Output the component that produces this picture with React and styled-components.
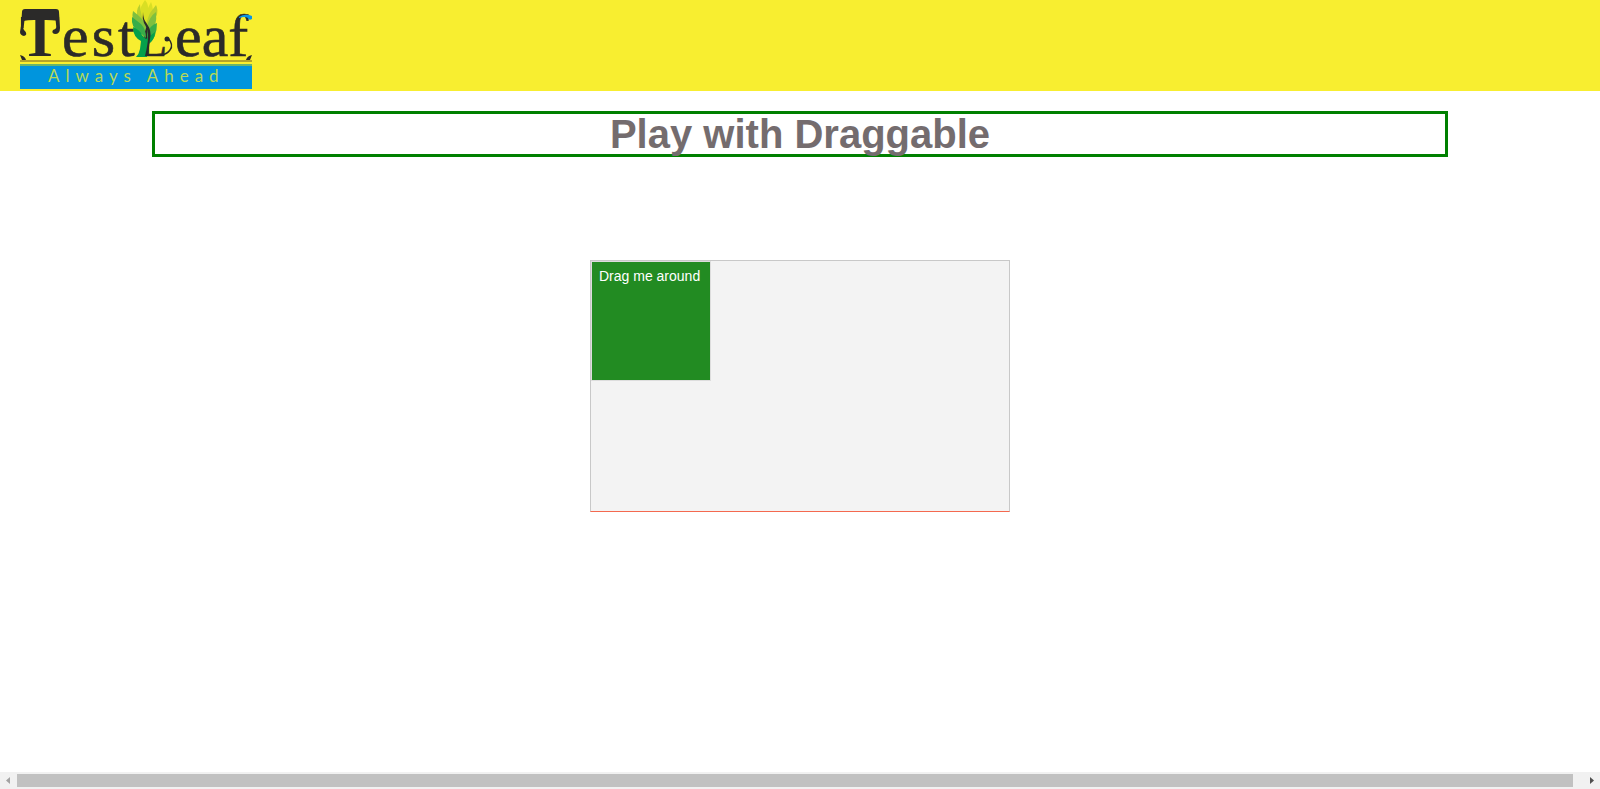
import React, { useRef, useState } from "react";
import styled, { createGlobalStyle } from "styled-components";

const GlobalStyle = createGlobalStyle`
  * { box-sizing: border-box; }
  body {
    margin: 0;
    background: #fff;
    font-family: "Liberation Sans", Arial, sans-serif;
  }
`;

const Page = styled.div`
  display: flex;
  flex-direction: column;
  min-height: 100vh;
`;

const Header = styled.header`
  padding: 0 20px 2px;
  background: #f8ee30;
`;

const LogoLink = styled.a`
  display: block;
  width: 232px;
  svg { display: block; overflow: visible; }
`;

const Main = styled.main`
  flex: 1;
  display: flex;
  flex-direction: column;
  align-items: center;
  padding-top: 20px;
`;

const Title = styled.h1`
  width: 81%;
  margin: 0 0 103px;
  border: 3px solid #008000;
  color: #746c6e;
  font-size: 40px;
  line-height: 40px;
  text-align: center;
`;

const DragArea = styled.section`
  width: 420px;
  height: 252px;
  border: 1px solid #c8c8c8;
  border-bottom-color: #f4694f;
  background: #f3f3f3;
`;

const DragBox = styled.div`
  width: 120px;
  height: 120px;
  padding: 6px 7px;
  border: 1px solid #ddd;
  background: #228b22;
  color: #fff;
  font-size: 14px;
  line-height: 16px;
  cursor: move;
  user-select: none;
  touch-action: none;
`;

const DragLabel = styled.p`
  margin: 0;
  white-space: nowrap;
`;

const ScrollBar = styled.footer`
  display: flex;
  align-items: center;
  height: 17px;
  background: #f1f1f1;
`;

const ScrollButton = styled.button`
  width: 17px;
  height: 17px;
  padding: 0;
  border: 0;
  background: transparent;
  color: ${(p) => (p.$active ? "#505050" : "#a3a3a3")};
  svg { display: block; }
`;

const ScrollTrack = styled.div`
  flex: 1;
  padding-right: 10px;
`;

const ScrollThumb = styled.div`
  height: 13px;
  background: #c1c1c1;
`;

function Logo() {
  return (
    <svg width="232" height="89" viewBox="20 0 232 89" role="img" aria-label="TestLeaf, Always Ahead">
      <g fill="#2b2a29" fontFamily="'Liberation Serif', serif">
        <text x="20" y="56" fontSize="60" fontWeight="700">T</text>
        <g stroke="#2b2a29" strokeWidth="0.6">
          <text x="62" y="56" fontSize="60" letterSpacing="3">est</text>
          <text x="139" y="56" fontSize="46">L</text>
          <text x="175" y="56" fontSize="60">eaf</text>
        </g>
        <path d="M25 9h31q3 0 3 3l1 16q0 6-5 6q-4-1-2-4q4-1 4-5q0-8-8-8H31q-7 0-8 8q0 5 2 6q3 4-1 5q-4-1-4-4l1-6l1-14q0-3 3-3" />
        <path d="M20 55q5 1 6 5h-4zM252 55q-5 1-6 5h4z" />
        <circle cx="167" cy="39" r="2.500" />
      </g>
      <path d="M168 38q6 7 2 12q-3 4-8 5" fill="none" stroke="#2b2a29" strokeWidth="1.500" />
      <path d="M239 17q6-4 13-1v3q-3 2-4-1q-3-2-9 0" fill="#0b96e6" />
      <path d="M145 0q-5 7-5 12l5 12l8-14q-1-6-2-8l-3 6q0-5-3-8" fill="#d9df24" />
      <path d="M140 4q-5 7-2 14l8 10l11-13q1-6-1-10l-6 8l-4 10q-6-7-6-19" fill="#b8cf2d" />
      <path d="M133 11q-2 8 3 16l8 8l3-10q-5-7-14-14M156 12q-7 5-9 15l1 11q10-11 8-26" fill="#7ebf3f" />
      <path d="M132 17q-1 10 6 14l8 7q0-9-5-14q-4-3-9-7M157 23q-8 3-10 11l1 11q9-7 9-22" fill="#39ad49" />
      <path d="M133 27q0 10 8 14l-1 8q-1 5-4 8h11l1-13q7-4 7-12l-9 7l-4-4q-2-5-9-8" fill="#05a04b" />
      <path d="M143 12q0 7 4 12q5 7 3 15l-2 17h-3q3-12 3-19q0-8-4-14q-2-5-1-11" fill="#2b2a29" />
      <path d="M20 60H252v2H20z" fill="#b6a42a" />
      <path d="M20 64H252v2H20z" fill="#6ab56b" />
      <path d="M20 66H252v23H20z" fill="#0095dd" />
      <text x="48" y="82" fill="#b6d957" fontFamily="Lato, sans-serif" fontSize="17" letterSpacing="6">Always Ahead</text>
    </svg>
  );
}

function Draggable({ children }) {
  const start = useRef(null);
  const [offset, setOffset] = useState({ x: 0, y: 0 });
  const limit = (n, max) => Math.max(0, Math.min(max, n));
  return (
    <DragBox
      style={{ transform: offset.x || offset.y ? `translate(${offset.x}px, ${offset.y}px)` : undefined }}
      onPointerDown={(e) => {
        start.current = { x: e.clientX - offset.x, y: e.clientY - offset.y };
        e.currentTarget.setPointerCapture(e.pointerId);
      }}
      onPointerMove={(e) => {
        if (start.current)
          setOffset({
            x: limit(e.clientX - start.current.x, 298),
            y: limit(e.clientY - start.current.y, 130),
          });
      }}
      onPointerUp={() => { start.current = null; }}
    >
      {children}
    </DragBox>
  );
}

export default function App() {
  return (
    <Page>
      <GlobalStyle />
      <Header>
        <LogoLink href="#" aria-label="TestLeaf home"><Logo /></LogoLink>
      </Header>
      <Main>
        <Title>Play with Draggable</Title>
        <DragArea>
          <Draggable><DragLabel>Drag me around</DragLabel></Draggable>
        </DragArea>
      </Main>
      <ScrollBar>
        <ScrollButton type="button" aria-label="Scroll left">
          <svg width="17" height="17" fill="currentColor"><path d="M10 5v7L6 8.500z" /></svg>
        </ScrollButton>
        <ScrollTrack><ScrollThumb /></ScrollTrack>
        <ScrollButton type="button" aria-label="Scroll right" $active>
          <svg width="17" height="17" fill="currentColor"><path d="M7 5v7l4-3.500z" /></svg>
        </ScrollButton>
      </ScrollBar>
    </Page>
  );
}
